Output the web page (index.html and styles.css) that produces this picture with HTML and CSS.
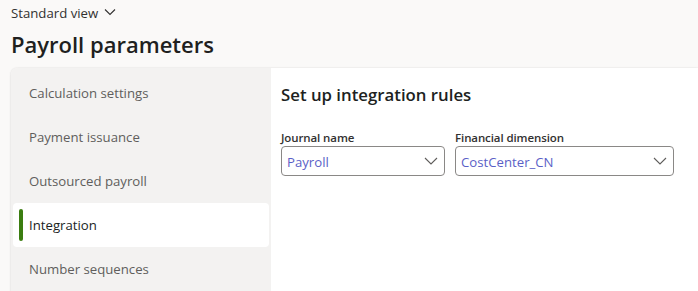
FILE: index.html
```html
<!DOCTYPE html>
<html>
<head>
<meta charset="utf-8">
<link rel="stylesheet" href="styles.css">
</head>
<body>
<header class="head">
  <div class="view">Standard view
    <svg class="view-chev" width="12" height="8" viewBox="0 0 12 8"><path d="M1 1.5 L6 6.5 L11 1.5" fill="none" stroke="#323130" stroke-width="1.1"/></svg>
  </div>
  <h1 class="title">Payroll parameters</h1>
</header>
<main class="card">
  <nav class="nav">
    <div class="nav-item">Calculation settings</div>
    <div class="nav-item">Payment issuance</div>
    <div class="nav-item">Outsourced payroll</div>
    <div class="nav-item active"><span class="bar"></span>Integration</div>
    <div class="nav-item">Number sequences</div>
  </nav>
  <section class="content">
    <h2 class="section-title">Set up integration rules</h2>
    <div class="fields">
      <div class="field">
        <label class="label">Journal name</label>
        <div class="select s1"><span class="value">Payroll</span>
          <svg class="chev" width="14" height="8" viewBox="0 0 14 8"><path d="M1 1 L7 7 L13 1" fill="none" stroke="#605e5c" stroke-width="1.1"/></svg>
        </div>
      </div>
      <div class="field">
        <label class="label">Financial dimension</label>
        <div class="select s2"><span class="value">CostCenter_CN</span>
          <svg class="chev" width="14" height="8" viewBox="0 0 14 8"><path d="M1 1 L7 7 L13 1" fill="none" stroke="#605e5c" stroke-width="1.1"/></svg>
        </div>
      </div>
    </div>
  </section>
</main>
</body>
</html>
```
FILE: styles.css
```css
html, body {
  margin: 0;
  padding: 0;
  background: #faf9f8;
  font-family: "Open Sans", "Noto Sans", sans-serif;
  color: #201f1e;
  overflow: hidden;
}
body {
  width: 698px;
  height: 291px;
}
.head {
  padding: 4px 0 0 11px;
}
.view {
  display: flex;
  align-items: center;
  gap: 6px;
  font-size: 13.2px;
  line-height: 18px;
  color: #323130;
}
.view-chev {
  margin-top: -2px;
}
.title {
  margin: 7px 0 0 0;
  font-size: 22px;
  font-weight: 600;
  line-height: 30px;
  color: #201f1e;
}
.card {
  margin: 9px 0 0 11px;
  display: flex;
  height: 230px;
  border-radius: 6px 0 0 0;
  box-shadow: 0 0 2px rgba(0,0,0,0.12), 0 1px 3px rgba(0,0,0,0.06);
  overflow: hidden;
}
.nav {
  width: 256px;
  background: #f3f2f1;
  padding: 3px 2px 0 2px;
  flex: none;
}
.nav-item {
  position: relative;
  height: 44px;
  display: flex;
  align-items: center;
  padding-left: 16px;
  font-size: 13.2px;
  color: #605e5c;
  border-radius: 4px;
}
.nav-item.active {
  background: #ffffff;
  color: #201f1e;
}
.bar {
  position: absolute;
  left: 6px;
  top: 6px;
  width: 4px;
  height: 32px;
  border-radius: 2px;
  background: #3b7d10;
}
.content {
  flex: 1;
  background: #ffffff;
  padding: 0 10px;
}
.section-title {
  margin: 14px 0 0 0;
  font-size: 16.8px;
  font-weight: 600;
  line-height: 26px;
  color: #201f1e;
}
.fields {
  display: flex;
  gap: 10px;
  margin-top: 22px;
}
.field {
  display: flex;
  flex-direction: column;
}
.label {
  font-size: 11.5px;
  font-weight: 600;
  line-height: 16px;
  color: #323130;
  letter-spacing: -0.1px;
}
.select {
  height: 28px;
  border: 1px solid #8a8886;
  border-radius: 4px;
  display: flex;
  align-items: center;
  justify-content: space-between;
  padding: 0 6px 0 5px;
  box-sizing: content-box;
}
.s1 { width: 151px; }
.s2 { width: 206px; }
.value {
  font-size: 13.2px;
  color: #5b5fc7;
  margin-top: 2px;
}
.chev {
  margin-top: -1px;
}
```
